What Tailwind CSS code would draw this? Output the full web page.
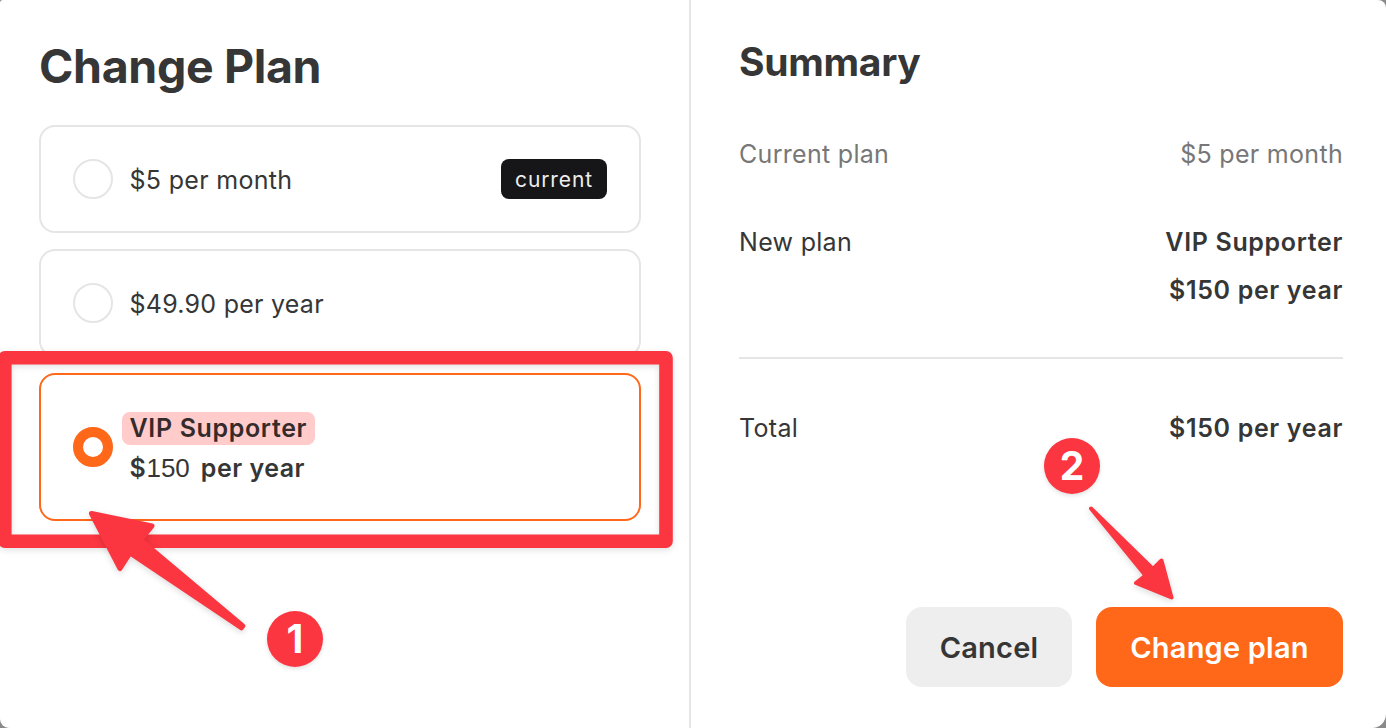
<!DOCTYPE html>
<html lang="en">

<head>
    <meta charset="UTF-8">
    <title>Change Plan</title>
    <script src="https://cdn.jsdelivr.net/npm/@tailwindcss/browser@4"></script>
</head>

<body class="bg-[#8a8a8a] font-['Inter','Liberation_Sans',sans-serif] text-[#363636]">
    <div class="relative flex w-[1386px] h-[728px] overflow-hidden">
        <div class="flex w-full h-full bg-white rounded-tl-[3px] rounded-tr-[8px] rounded-bl-[9px] rounded-br-[14px] overflow-hidden">
            <!-- Plan list -->
            <div class="w-[691px] shrink-0 border-r-2 border-[#e5e5e5] pl-[39px] pr-12 pt-9">
                <h1 class="text-[46.5px] leading-[60px] font-bold tracking-[-0.35px]">Change Plan</h1>

                <div class="mt-[29px] flex flex-col gap-4 text-[25px] tracking-[0.3px]">
                    <label class="flex items-center h-[108px] px-8 border-2 border-[#e5e5e5] rounded-2xl">
                        <span class="size-10 rounded-full border-2 border-[#e5e5e5]"></span>
                        <span class="ml-[16.5px] pt-1">$5 per month</span>
                        <span class="ml-auto flex items-center justify-center w-[106px] h-10 pt-0.5 rounded-lg bg-[#161618] text-[#ededed] text-[21px] tracking-[0.9px]">current</span>
                    </label>
                    <label class="flex items-center h-[108px] px-8 border-2 border-[#e5e5e5] rounded-2xl">
                        <span class="size-10 rounded-full border-2 border-[#e5e5e5]"></span>
                        <span class="ml-[16.5px] pt-1 tracking-[0.25px]">$49.90 per year</span>
                    </label>
                    <label class="flex items-center h-[148px] px-8 border-2 border-[#ff6719] rounded-2xl">
                        <span class="size-10 rounded-full border-10 border-[#ff6719]"></span>
                        <span class="ml-[9px] pt-1.5 flex flex-col items-start font-semibold leading-10 tracking-[0.65px]">
                            <span class="h-[33px] leading-[32px] px-[7.5px] rounded-lg bg-[#ffcbcb] text-[#362b2b]">VIP Supporter</span>
                            <span class="pl-[7.5px] mt-[3px]">$<span class="font-normal font-['Liberation_Sans'] text-[26px] tracking-[0px]">150</span><span class="ml-[11px] tracking-[0.5px]">per year</span></span>
                        </span>
                    </label>
                </div>
            </div>

            <!-- Summary -->
            <div class="flex-1 flex flex-col pl-12 pr-[43px] pt-9 pb-[41px] text-[25px] leading-12 tracking-[0.3px]">
                <h2 class="text-[39px] leading-[52px] font-bold tracking-[-0.3px]">Summary</h2>
                <div class="mt-[42px] flex justify-between text-[#777777]">
                    <span>Current plan</span>
                    <span>$5 per month</span>
                </div>
                <div class="mt-10 flex justify-between">
                    <span>New plan</span>
                    <div class="flex flex-col items-end font-semibold tracking-[0.65px]">
                        <span>VIP Supporter</span>
                        <span>$150 per year</span>
                    </div>
                </div>
                <hr class="mt-[43px] border-t-2 border-[#e5e5e5]">
                <div class="mt-[45px] flex justify-between">
                    <span>Total</span>
                    <span class="font-semibold tracking-[0.65px]">$150 per year</span>
                </div>
                <div class="mt-auto flex justify-end gap-6 text-[29px] font-semibold tracking-[0.2px]">
                    <button class="w-[166px] h-20 pt-0.5 rounded-2xl bg-[#eeeeee]">Cancel</button>
                    <button class="w-[247px] h-20 pt-0.5 rounded-2xl bg-[#ff6719] text-white">Change plan</button>
                </div>
            </div>
        </div>

        <!-- Step markers -->
        <svg class="absolute inset-0" width="1386" height="728" viewBox="0 0 1386 728" fill="#fb3640" stroke="#fb3640" stroke-linejoin="round">
            <rect class="drop-shadow-[0_2px_3px_rgba(0,0,0,0.12)]" fill="none" stroke-width="13.6" x="4.8" y="357.8" width="661.2" height="183.5" />
            <path class="drop-shadow-[0_2px_3px_rgba(0,0,0,0.15)]" stroke-width="5" d="M91.5 513.5 L152 526 L140.5 540 L242.8 626 L241.3 627.8 L130 553 L120 568.5 Z" />
            <path class="drop-shadow-[0_2px_3px_rgba(0,0,0,0.15)]" stroke-width="4" d="M1091 508.5 L1153 569 L1161.5 560.5 L1171.5 597.5 L1136 583 L1145.5 575.5 Z" />
        </svg>
        <div class="absolute left-[267px] top-[611px] size-14 flex items-center justify-center rounded-full bg-[#fb3640] text-white text-[39px] font-bold shadow-[0_2px_4px_rgba(0,0,0,0.12)]">1</div>
        <div class="absolute left-[1044px] top-[438px] size-14 flex items-center justify-center rounded-full bg-[#fb3640] text-white text-[39px] font-bold shadow-[0_2px_4px_rgba(0,0,0,0.12)]">2</div>
    </div>
</body>

</html>
